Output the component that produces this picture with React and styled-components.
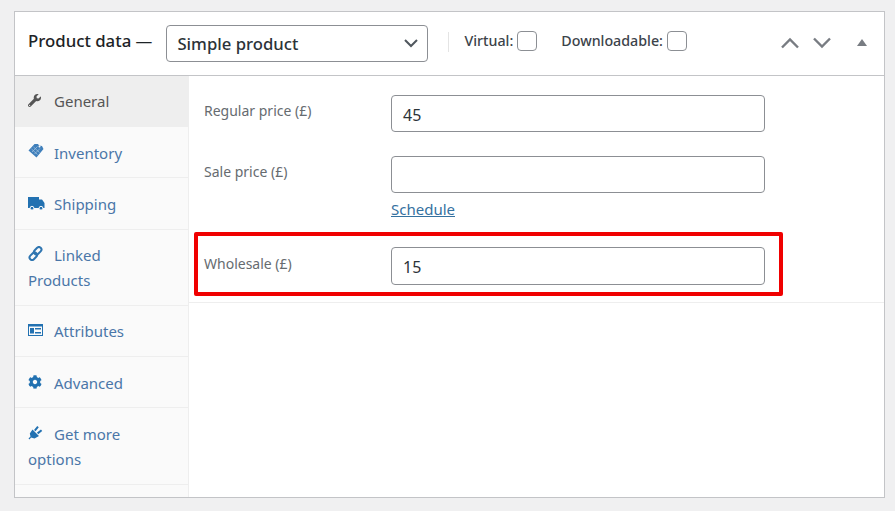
import React from 'react';
import styled, { createGlobalStyle } from 'styled-components';
import { FaWrench, FaCog } from 'react-icons/fa';

const Global = createGlobalStyle`
  html, body {
    margin: 0;
    background: #f0f0f1;
  }
  body {
    font-family: "Noto Sans", "Open Sans", sans-serif;
    color: #3c434a;
  }
`;

const Page = styled.div`
  width: 895px;
  height: 511px;
  padding: 11px 10px 13px 14px;
  box-sizing: border-box;
  overflow: hidden;
`;

const Card = styled.div`
  height: 487px;
  background: #fff;
  border: 1px solid #c3c4c7;
  box-sizing: border-box;
  display: flex;
  flex-direction: column;
`;

const Header = styled.div`
  height: 64px;
  flex: none;
  box-sizing: border-box;
  border-bottom: 1px solid #c3c4c7;
  display: flex;
  align-items: center;
  padding: 0 17px 0 13px;
`;

const Title = styled.h2`
  margin: 0 14px 0 0;
  font-size: 16.8px;
  font-weight: 500;
  color: #1d2327;
  white-space: nowrap;
  position: relative;
  top: -3px;
`;

const ProductSelect = styled.div`
  width: 262px;
  height: 37px;
  box-sizing: border-box;
  border: 1px solid #8c8f94;
  border-radius: 4px;
  display: flex;
  align-items: center;
  justify-content: space-between;
  padding: 0 9px 0 10px;
  font-size: 16.7px;
  font-weight: 500;
  color: #2c3338;
`;

const Divider = styled.span`
  width: 1px;
  height: 20px;
  background: #e4e4e4;
  margin: 0 15px 0 20px;
  position: relative;
  top: -2px;
`;

const CheckLabel = styled.label`
  display: flex;
  align-items: center;
  gap: 4px;
  font-size: 14.25px;
  font-weight: 500;
  color: #3c434a;
  margin-right: ${(p) => p.$gap || 0}px;
  position: relative;
  top: -3px;
`;

const CheckBox = styled.span`
  width: 20px;
  height: 20px;
  box-sizing: border-box;
  border: 1px solid #8c8f94;
  border-radius: 4px;
  background: #fff;
`;

const Handles = styled.div`
  margin-left: auto;
  display: flex;
  align-items: center;
  gap: 12px;
  position: relative;
  top: -1px;
`;

const Triangle = styled.span`
  width: 0;
  height: 0;
  margin-left: 13px;
  border-left: 5px solid transparent;
  border-right: 5px solid transparent;
  border-bottom: 7px solid #787c82;
`;

const Body = styled.div`
  flex: 1;
  display: flex;
  min-height: 0;
`;

const Sidebar = styled.ul`
  width: 173px;
  flex: none;
  margin: 0;
  padding: 0;
  list-style: none;
  background: #fafafa;
  border-right: 1px solid #eee;
`;

const Tab = styled.li`
  height: ${(p) => p.$height}px;
  box-sizing: border-box;
  padding: ${(p) => p.$top}px 50px 0 13px;
  font-size: 15px;
  line-height: 25px;
  color: ${(p) => (p.$active ? '#555' : '#4a76a8')};
  background: ${(p) => (p.$active ? '#eee' : 'transparent')};
  border-bottom: 1px solid #eee;
`;

const TabIcon = styled.span`
  display: inline-flex;
  width: 26px;
  height: 16px;
  vertical-align: -1px;
  position: relative;
  top: -1px;
  color: ${(p) => (p.$active ? '#555' : '#2271b1')};
`;

const Panel = styled.div`
  flex: 1;
  min-width: 0;
  position: relative;
`;

const FieldGroup = styled.div`
  padding: 19px 0 17px;
  border-bottom: 1px solid #eee;
`;

const Field = styled.div`
  display: flex;
  padding-left: 15px;
  margin-top: ${(p) => p.$top || 0}px;
`;

const FieldLabel = styled.label`
  width: 187px;
  flex: none;
  font-size: 14px;
  line-height: 20px;
  padding-top: ${(p) => p.$top || 6}px;
  color: #666b70;
`;

const FieldControl = styled.div`
  width: 374px;
`;

const Input = styled.div`
  height: ${(p) => p.$height || 37}px;
  box-sizing: border-box;
  border: 1px solid #8c8f94;
  border-radius: 4px;
  background: #fff;
  padding: 2px 11px 0;
  display: flex;
  align-items: center;
  font-size: 16px;
  color: #2c3338;
`;

const ScheduleLink = styled.a`
  display: block;
  margin-top: 5px;
  font-size: 15px;
  line-height: 22px;
  color: #35719f;
  text-decoration: underline;
`;

const Highlight = styled.div`
  position: absolute;
  left: 5px;
  top: 156px;
  width: 589px;
  height: 64px;
  box-sizing: border-box;
  border: 4px solid #f00000;
  border-radius: 2px;
  pointer-events: none;
`;

const Chevron = ({ up }) => (
  <svg width="20" height="12" viewBox="0 0 20 12" fill="none" stroke="#787c82" strokeWidth="2.4">
    <path d={up ? 'M2 10.5 L10 2.5 L18 10.5' : 'M2 1.5 L10 9.5 L18 1.5'} />
  </svg>
);

const InventoryIcon = () => (
  <svg width="16" height="16" viewBox="0 0 16 16">
    <path d="M6.5 1 L10 1 L11 2.5 L14 3 L15.5 6 L8.5 14.5 L0.5 7.5 Z" fill="#3f7fbb" />
    <path d="M3.5 6 L9.5 11.5 M5.5 4 L11.5 9.5 M4 9 L9.5 3.5 M6.5 11 L12 5.5" stroke="#a9c6e0" strokeWidth="0.7" />
    <circle cx="11.5" cy="3.6" r="1" fill="#fafafa" />
  </svg>
);

const TruckIcon = () => (
  <svg width="17" height="15" viewBox="0 -1 17 15">
    <path d="M0 1 H11 V3.5 H14 L16.5 7 V12 H0 Z" fill="#2271b1" />
    <circle cx="4" cy="12.2" r="1.9" fill="#2271b1" stroke="#fafafa" strokeWidth="1" />
    <circle cx="13" cy="12.2" r="1.9" fill="#2271b1" stroke="#fafafa" strokeWidth="1" />
  </svg>
);

const LinkIcon = () => (
  <svg width="15" height="15" viewBox="0 0 15 15" fill="none" stroke="#2f75b0" strokeWidth="2">
    <rect x="7.2" y="0.6" width="5" height="8.4" rx="2.5" transform="rotate(45 9.7 4.8)" />
    <rect x="2.8" y="6" width="5" height="8.4" rx="2.5" transform="rotate(45 5.3 10.2)" />
  </svg>
);

const AttributesIcon = () => (
  <svg width="15" height="14" viewBox="0 0 15 14">
    <path d="M0 1 H15 V13 H0 Z" fill="#2271b1" />
    <path d="M1 3.5 H14 V12 H1 Z" fill="#fafafa" />
    <path d="M2 5 H6 V10.5 H2 Z M7 5 H13 V6.6 H7 Z M7 8.9 H13 V10.5 H7 Z" fill="#2271b1" />
  </svg>
);

const PlugIcon = () => (
  <svg width="15" height="15" viewBox="0 0 15 15">
    <path d="M4.5 4.5 L11 11 L6.5 13.5 L3 12.5 L1.5 14.5 L0.5 13.5 L2.5 11.5 L1.8 8.5 Z" fill="#2271b1" />
    <path d="M6.8 5.6 L10 1.6 M9.6 8.4 L13.6 5.2" stroke="#2271b1" strokeWidth="2" />
  </svg>
);

const tabs = [
  { label: 'General', icon: <FaWrench size={13} />, height: 51, top: 13, active: true },
  { label: 'Inventory', icon: <InventoryIcon />, height: 51, top: 14 },
  { label: 'Shipping', icon: <TruckIcon />, height: 52, top: 14 },
  { label: 'Linked Products', icon: <LinkIcon />, height: 76, top: 13 },
  { label: 'Attributes', icon: <AttributesIcon />, height: 51, top: 13 },
  { label: 'Advanced', icon: <FaCog size={14} />, height: 51, top: 14 },
  { label: 'Get more options', icon: <PlugIcon />, height: 77, top: 14 },
];

export default function App() {
  return (
    <Page>
      <Global />
      <Card>
        <Header>
          <Title>Product data —</Title>
          <ProductSelect>
            Simple product
            <svg width="14" height="9" viewBox="0 0 14 9" fill="none" stroke="#50575e" strokeWidth="2">
              <path d="M1 1 L7 7 L13 1" />
            </svg>
          </ProductSelect>
          <Divider />
          <CheckLabel $gap={24}>Virtual: <CheckBox /></CheckLabel>
          <CheckLabel>Downloadable: <CheckBox /></CheckLabel>
          <Handles>
            <Chevron up />
            <Chevron />
            <Triangle />
          </Handles>
        </Header>
        <Body>
          <Sidebar>
            {tabs.map((t) => (
              <Tab key={t.label} $active={t.active} $height={t.height} $top={t.top}>
                <TabIcon $active={t.active}>{t.icon}</TabIcon>
                {t.label}
              </Tab>
            ))}
          </Sidebar>
          <Panel>
            <FieldGroup>
              <Field>
                <FieldLabel>Regular price (£)</FieldLabel>
                <FieldControl><Input>45</Input></FieldControl>
              </Field>
              <Field $top={24}>
                <FieldLabel>Sale price (£)</FieldLabel>
                <FieldControl>
                  <Input />
                  <ScheduleLink>Schedule</ScheduleLink>
                </FieldControl>
              </Field>
              <Field $top={27}>
                <FieldLabel $top={7}>Wholesale (£)</FieldLabel>
                <FieldControl><Input $height={38}>15</Input></FieldControl>
              </Field>
            </FieldGroup>
            <Highlight />
          </Panel>
        </Body>
      </Card>
    </Page>
  );
}
